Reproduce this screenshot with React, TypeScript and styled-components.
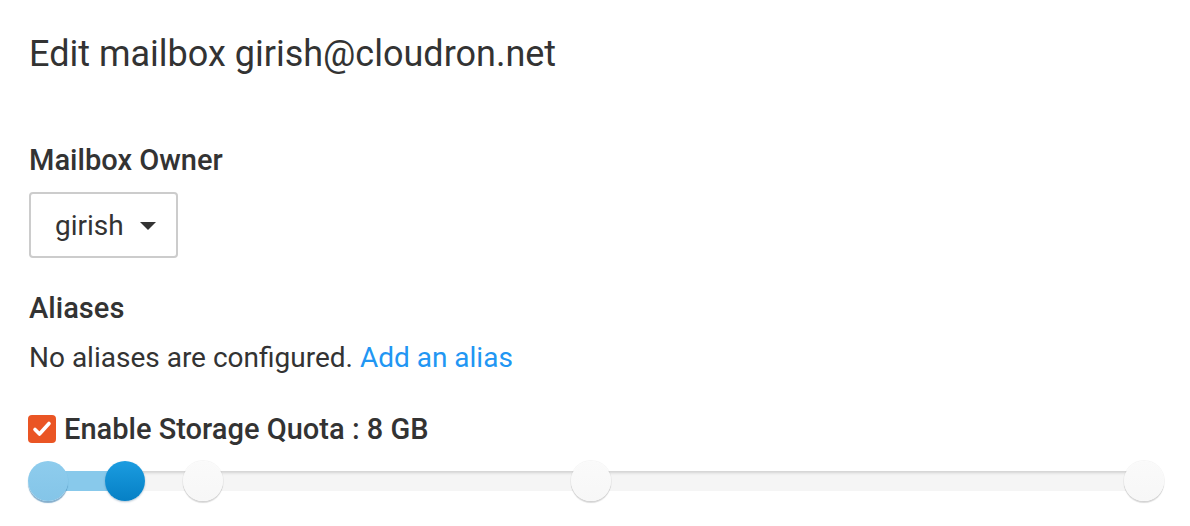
import styled, { createGlobalStyle } from 'styled-components';

const GlobalStyle = createGlobalStyle`
  body {
    margin: 0;
    background: #fff;
    font-family: Roboto, "Liberation Sans", Arial, sans-serif;
    color: #333;
  }
`;

const Page = styled.div`
  padding: 0 29px 40px;
  width: 1190px;
  box-sizing: border-box;
`;

const Title = styled.h1`
  margin: 0;
  padding-top: 32px;
  font-size: 36px;
  font-weight: 400;
  line-height: 44px;
  color: #333;
`;

const Form = styled.div`
  display: flex;
  flex-direction: column;
  margin-top: 68px;
`;

const Label = styled.div`
  font-family: "Roboto Medium", Roboto, "Liberation Sans", Arial, sans-serif;
  font-size: 29px;
  font-weight: 500;
  line-height: 32px;
  color: #333;
`;

const Select = styled.div`
  display: inline-flex;
  align-items: center;
  align-self: flex-start;
  gap: 16px;
  height: 66px;
  box-sizing: border-box;
  margin-top: 16px;
  padding: 0 20px 0 24px;
  border: 2px solid #ccc;
  border-radius: 4px;
  font-size: 28px;
  color: #333;
`;

const Caret = styled.span`
  width: 0;
  height: 0;
  margin-top: 2px;
  border-left: 8px solid transparent;
  border-right: 8px solid transparent;
  border-top: 8px solid #333;
`;

const Section = styled.div`
  margin-top: 34px;
`;

const Text = styled.p`
  margin: 16px 0 0;
  font-size: 28px;
  line-height: 36px;
`;

const Link = styled.a`
  color: #2196f3;
  text-decoration: none;
`;

const CheckRow = styled.label`
  display: flex;
  align-items: center;
  gap: 8px;
  margin-top: 37px;
  margin-left: -1px;
  font-family: "Roboto Medium", Roboto, "Liberation Sans", Arial, sans-serif;
  font-size: 29px;
  font-weight: 500;
  line-height: 32px;
`;

const Box = styled.span`
  display: inline-flex;
  align-items: center;
  justify-content: center;
  width: 28px;
  height: 28px;
  border-radius: 4px;
  background: #ea5524;
`;

const Slider = styled.div`
  position: relative;
  margin-top: 26px;
  width: 1134px;
  height: 20px;
  border-radius: 10px;
  background: #f5f5f5;
  box-shadow: inset 0 3px 3px -1px rgba(0, 0, 0, 0.14);
`;

const Fill = styled.div`
  position: absolute;
  left: 0;
  top: 0;
  bottom: 0;
  border-radius: 10px 0 0 10px;
  background: #88c9eb;
`;

const Handle = styled.div<{ $kind: 'low' | 'high' | 'tick' }>`
  position: absolute;
  top: 50%;
  width: 40px;
  height: 40px;
  border-radius: 50%;
  transform: translate(-50%, -50%);
  background: ${({ $kind }) =>
    $kind === 'low'
      ? 'linear-gradient(#8ecced, #84c5e8)'
      : $kind === 'high'
      ? 'linear-gradient(#1b9ce0, #0680c5)'
      : 'linear-gradient(#fafafa, #f7f7f7)'};
  box-shadow: ${({ $kind }) =>
    $kind === 'low'
      ? '0 2px 1px rgba(50, 120, 170, 0.6)'
      : $kind === 'high'
      ? '0 1px 2px rgba(0, 60, 110, 0.3)'
      : '0 0 0 1px rgba(0, 0, 0, 0.04), 0 2px 1px rgba(0, 0, 0, 0.14)'};
`;

const handles: { left: number; kind: 'low' | 'high' | 'tick' }[] = [
  { left: 19, kind: 'low' },
  { left: 174, kind: 'tick' },
  { left: 562, kind: 'tick' },
  { left: 1115, kind: 'tick' },
  { left: 96, kind: 'high' },
];

export default function App() {
  return (
    <Page>
      <GlobalStyle />
      <Title>Edit mailbox girish@cloudron.net</Title>
      <Form>
        <Label>Mailbox Owner</Label>
        <Select>
          girish
          <Caret />
        </Select>
        <Section>
          <Label>Aliases</Label>
          <Text>
            No aliases are configured. <Link href="#">Add an alias</Link>
          </Text>
        </Section>
        <CheckRow>
          <Box>
            <svg width="22" height="22" viewBox="0 0 22 22">
              <path d="M4 11.5l4.5 4.5L18 5.5" fill="none" stroke="#fff" strokeWidth="3.6" strokeLinecap="round" strokeLinejoin="round" />
            </svg>
          </Box>
          Enable Storage Quota : 8 GB
        </CheckRow>
        <Slider>
          <Fill style={{ width: 96 }} />
          {handles.map((h, i) => (
            <Handle key={i} $kind={h.kind} style={{ left: h.left }} />
          ))}
        </Slider>
      </Form>
    </Page>
  );
}
